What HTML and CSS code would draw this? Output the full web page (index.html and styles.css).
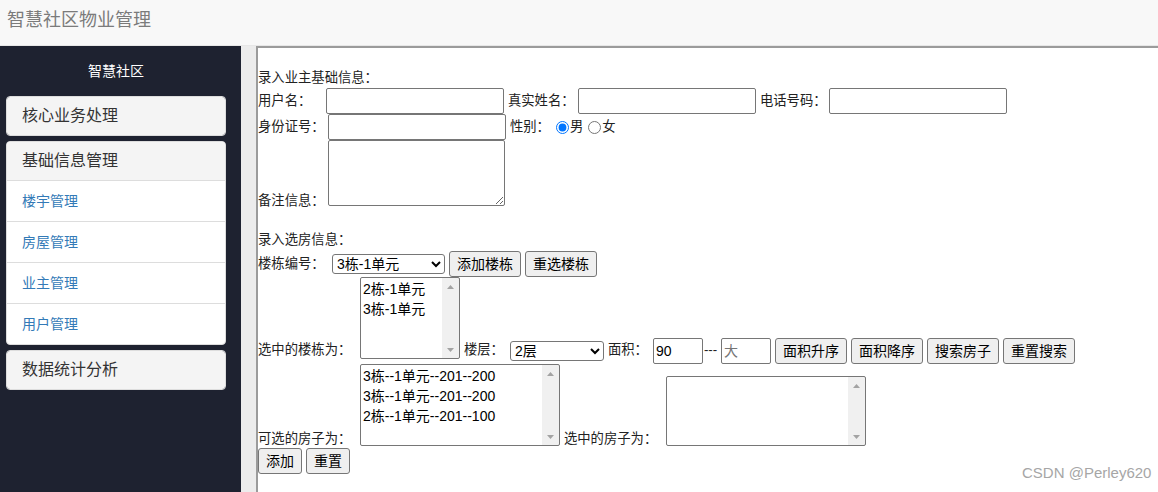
FILE: index.html
```html
<!DOCTYPE html>
<html lang="zh">
<head>
<meta charset="utf-8">
<title>智慧社区物业管理</title>
<link rel="stylesheet" href="styles.css">
</head>
<body>
<header class="topbar"><span class="brand">智慧社区物业管理</span></header>
<div class="layout">
  <aside class="sidebar">
    <div class="side-title">智慧社区</div>
    <div class="panel"><div class="panel-heading">核心业务处理</div></div>
    <div class="panel">
      <div class="panel-heading">基础信息管理</div>
      <ul class="menu">
        <li><a href="#">楼宇管理</a></li>
        <li><a href="#">房屋管理</a></li>
        <li><a href="#">业主管理</a></li>
        <li><a href="#">用户管理</a></li>
      </ul>
    </div>
    <div class="panel"><div class="panel-heading">数据统计分析</div></div>
  </aside>
  <div class="gutter"></div>
  <main class="content">
    <div class="section-title">录入业主基础信息：</div>
    <div class="row row-mid">
      <label class="lbl user">用户名：</label><input class="txt" type="text">
      <label class="lbl real">真实姓名：</label><input class="txt" type="text">
      <label class="lbl phone">电话号码：</label><input class="txt" type="text">
    </div>
    <div class="row row-mid">
      <label class="lbl idno">身份证号：</label><input class="txt" type="text">
      <label class="lbl sex">性别：</label>
      <input class="radio" type="radio" name="sex" checked><span class="opt gap">男</span>
      <input class="radio" type="radio" name="sex"><span class="opt">女</span>
    </div>
    <div class="row row-end">
      <label class="lbl idno low">备注信息：</label><textarea class="memo"></textarea>
    </div>
    <div class="section-title second">录入选房信息：</div>
    <div class="row row-mid">
      <label class="lbl bno">楼栋编号：</label>
      <select class="drop building"><option>3栋-1单元</option><option>2栋-1单元</option></select>
      <button class="btn" type="button">添加楼栋</button>
      <button class="btn" type="button">重选楼栋</button>
    </div>
    <div class="row row-end">
      <label class="lbl long base7">选中的楼栋为：</label>
      <select class="listbox lb-small" multiple size="4"><option>2栋-1单元</option><option>3栋-1单元</option></select>
      <label class="lbl floor-l base7">楼层：</label>
      <select class="drop floor"><option>2层</option><option>1层</option></select>
      <label class="lbl area base7">面积：</label>
      <input class="txt num tight" type="text" value="90"><span class="dash base7">---</span><input class="txt num" type="text" placeholder="大">
      <button class="btn" type="button">面积升序</button>
      <button class="btn" type="button">面积降序</button>
      <button class="btn" type="button">搜索房子</button>
      <button class="btn" type="button">重置搜索</button>
    </div>
    <div class="row row-end">
      <label class="lbl long base2">可选的房子为：</label>
      <select class="listbox lb-wide" multiple size="4"><option>3栋--1单元--201--200</option><option>3栋--1单元--201--200</option><option>2栋--1单元--201--100</option></select>
      <label class="lbl long base2">选中的房子为：</label>
      <select class="listbox lb-short" multiple size="3"></select>
    </div>
    <div class="row">
      <button class="btn" type="button">添加</button>
      <button class="btn" type="button">重置</button>
    </div>
    <div class="watermark">CSDN @Perley620</div>
  </main>
</div>
</body>
</html>
```
FILE: styles.css
```css
* { box-sizing: border-box; }
html, body {
  margin: 0;
  height: 100%;
  overflow: hidden;
}
body {
  font-family: "Liberation Sans", "Noto Sans CJK SC", sans-serif;
  background: #ececec;
}
.topbar {
  height: 46px;
  background: #f8f8f8;
  border-bottom: 1px solid #e7e7e7;
  padding-left: 7px;
  display: flex;
  align-items: center;
}
.brand {
  font-size: 18px;
  line-height: 20px;
  color: #7b7b7b;
  margin-top: -6px;
}
.layout {
  display: flex;
  height: calc(100% - 46px);
}
.sidebar {
  width: 241px;
  flex: none;
  background: #1e2230;
  padding: 15px 15px 0 6px;
}
.side-title {
  width: 220px;
  text-align: center;
  color: #fff;
  font-size: 14px;
  line-height: 20px;
  margin-bottom: 15px;
}
.panel {
  width: 220px;
  border: 1px solid #ddd;
  border-radius: 4px;
  background: #fff;
  margin-bottom: 5px;
  overflow: hidden;
}
.panel-heading {
  background: #f4f4f4;
  padding: 10px 15px;
  font-size: 16px;
  line-height: 18px;
  color: #333;
}
.menu {
  list-style: none;
  margin: 0;
  padding: 0;
  border-top: 1px solid #ddd;
}
.menu li {
  padding: 10px 15px;
  line-height: 20px;
  font-size: 14px;
  border-bottom: 1px solid #ddd;
}
.menu li:last-child { border-bottom: none; }
.menu a {
  color: #337ab7;
  text-decoration: none;
}
.gutter {
  width: 15px;
  flex: none;
  background: #ececec;
}
.content {
  position: relative;
  flex: 1;
  background: #fff;
  border-top: 2px solid #9b9b9b;
  border-left: 2px solid #9b9b9b;
  padding-top: 20px;
  font-size: 13.33px;
  color: #222;
}
.section-title {
  line-height: 20px;
  height: 20px;
}
.section-title.second {
  margin-top: 24px;
  margin-bottom: 1px;
}
.row {
  display: flex;
}
.row-mid { align-items: center; }
.row-end { align-items: flex-end; }
.lbl {
  line-height: 14px;
  margin-right: 4px;
  white-space: nowrap;
}
.lbl.user { margin-right: 14.67px; }
.lbl.real { margin-right: 3.33px; }
.lbl.phone { margin-right: 2.33px; }
.lbl.idno { margin-right: 3.33px; }
.lbl.sex { margin-right: 6px; }
.lbl.bno { margin-right: 7.33px; }
.lbl.long { margin-right: 8.67px; }
.lbl.floor-l { margin-right: 6px; }
.lbl.area { margin-right: 5px; }
.low { margin-bottom: -2px; }
.base7 { margin-bottom: 7px; }
.base2 { margin-bottom: 2px; }
.txt {
  width: 178px;
  height: 26px;
  margin: 0 4px 0 0;
  border: 1px solid #767676;
  border-radius: 2px;
  padding: 1px 2px;
  font: 14px "Liberation Sans", "Noto Sans CJK SC", sans-serif;
  color: #000;
}
.txt.num { width: 50px; }
.txt.tight { margin-right: 0; }
.txt::placeholder { color: #757575; }
.dash {
  line-height: 14px;
  margin: 0 3.7px 7px 1px;
}
.radio {
  width: 13px;
  height: 13px;
  margin: 0 1px 0 0;
}
.opt { line-height: 14px; }
.opt.gap { margin-right: 5px; }
.memo {
  width: 177px;
  height: 66px;
  margin: 0;
  border: 1px solid #767676;
  border-radius: 2px;
  font: 14px "Liberation Sans", "Noto Sans CJK SC", sans-serif;
}
.drop {
  height: 20px;
  margin: 0 4px 0 0;
  border: 1px solid #767676;
  border-radius: 3px;
  background-color: #fff;
  padding: 0;
  font: 14px "Liberation Sans", "Noto Sans CJK SC", sans-serif;
  color: #000;
}
.drop.building { width: 113px; }
.drop.floor { width: 94px; margin-bottom: 3px; }
.btn {
  height: 26px;
  margin: 0 4px 0 0;
  padding: 0 7px;
  border: 1px solid #767676;
  border-radius: 3px;
  background: #efefef;
  font: 14px "Liberation Sans", "Noto Sans CJK SC", sans-serif;
  color: #000;
  line-height: 20px;
}
.listbox {
  margin: 0 4px 0 0;
  border: 1px solid #767676;
  border-radius: 2px;
  padding: 0;
  font: 14px "Liberation Sans", "Noto Sans CJK SC", sans-serif;
  color: #000;
  background:
    url("data:image/svg+xml,%3Csvg xmlns='http://www.w3.org/2000/svg' width='17' height='17'%3E%3Cpath d='M5 11h7L8.5 7z' fill='%23a3a3a3'/%3E%3C/svg%3E") right top / 17px 17px no-repeat,
    url("data:image/svg+xml,%3Csvg xmlns='http://www.w3.org/2000/svg' width='17' height='17'%3E%3Cpath d='M5 7h7L8.5 11z' fill='%23a3a3a3'/%3E%3C/svg%3E") right bottom / 17px 17px no-repeat,
    linear-gradient(#f0f0f0, #f0f0f0) right top / 17px 100% no-repeat,
    #fff;
}
.listbox option {
  line-height: 20px;
  min-height: 20px;
  padding: 0 2px;
}
.lb-small { width: 100px; height: 82px; margin-bottom: 5px; }
.lb-wide { width: 200px; height: 82px; margin-bottom: 2px; }
.lb-short { width: 200px; height: 70px; margin-bottom: 2px; }
.watermark {
  position: absolute;
  left: 764px;
  top: 417px;
  font-size: 15px;
  line-height: 16px;
  color: #a6a6a6;
  font-family: "Liberation Sans", sans-serif;
}
```
